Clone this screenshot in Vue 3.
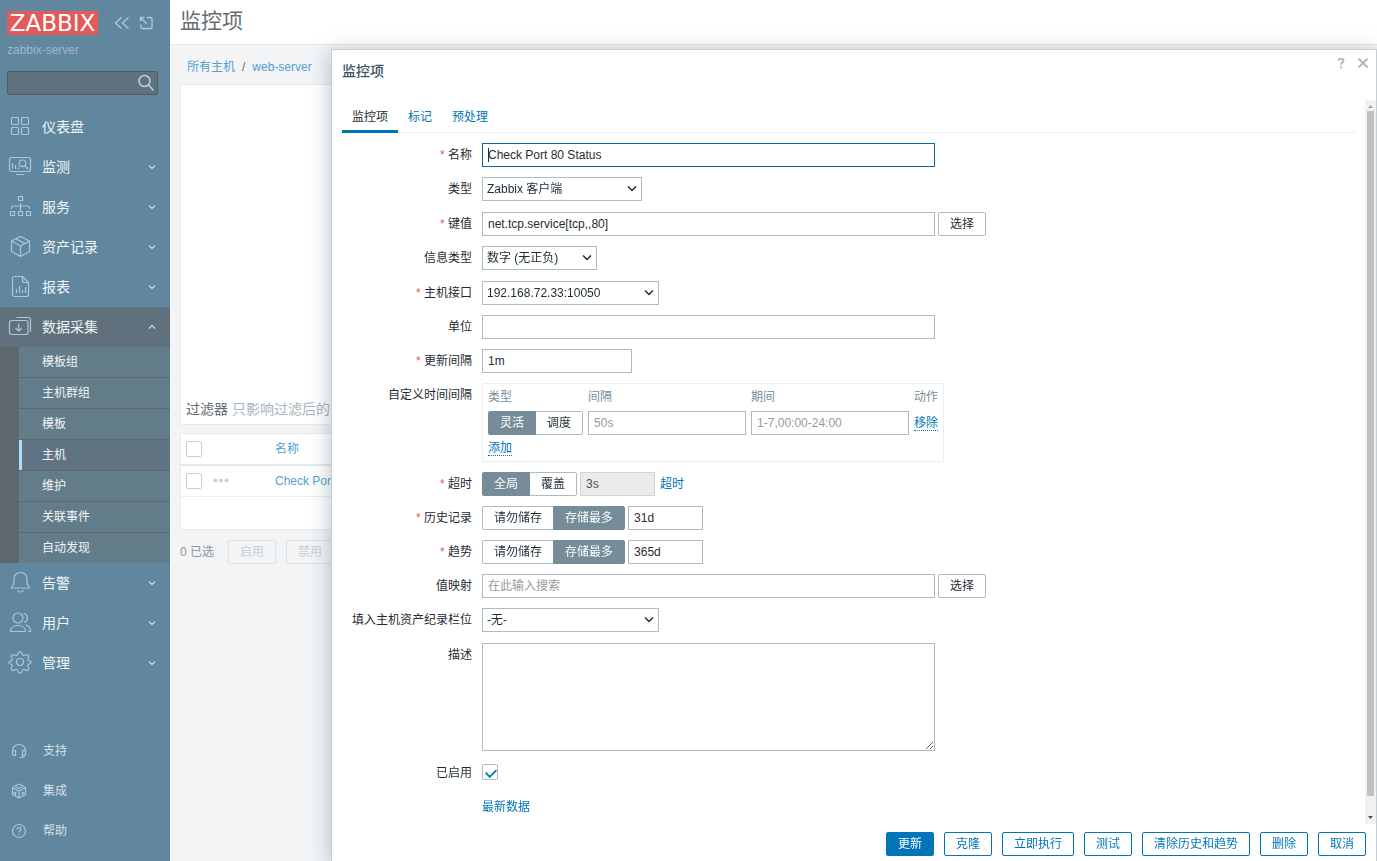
<script setup>
import { onMounted, reactive, ref } from 'vue'

const mainMenu = [
  { name: '仪表盘', icon: 'M4.5 2.5h5a1 1 0 0 1 1 1v5a1 1 0 0 1-1 1h-5a1 1 0 0 1-1-1v-5a1 1 0 0 1 1-1zM14.5 2.5h5a1 1 0 0 1 1 1v5a1 1 0 0 1-1 1h-5a1 1 0 0 1-1-1v-5a1 1 0 0 1 1-1zM4.5 12.5h5a1 1 0 0 1 1 1v5a1 1 0 0 1-1 1h-5a1 1 0 0 1-1-1v-5a1 1 0 0 1 1-1zM14.5 12.5h5a1 1 0 0 1 1 1v5a1 1 0 0 1-1 1h-5a1 1 0 0 1-1-1v-5a1 1 0 0 1 1-1z', leaf: true },
  { name: '监测', icon: 'M3.5 2.5h17a2 2 0 0 1 2 2v10a2 2 0 0 1-2 2h-17a2 2 0 0 1-2-2v-10a2 2 0 0 1 2-2zM8 19.5h8M4.5 8v6M7.5 10v4M10.5 12.5v1.5M14.5 5a3.300 3.300 0 1 1 0 6.600a3.300 3.300 0 0 1 0-6.600zM17 10.600l3.200 3.400' },
  { name: '服务', icon: 'M10.5 1.500h4v4h-4zM12.500 8v8M3.500 14v-1a2 2 0 0 1 2-2h14a2 2 0 0 1 2 2v1M2.500 16.500h4v4h-4zM10.500 16.500h4v4h-4zM18.500 16.500h4v4h-4z' },
  { name: '资产记录', icon: 'M12.500 1.500l9 4.500v10.500l-9 5l-9-5v-10.500zM3.500 6l9 5l9-5M12.500 11v10.500M8 3.800l9 4.800' },
  { name: '报表', icon: 'M6.500 1.500h8l6 6v12a2 2 0 0 1-2 2h-12a2 2 0 0 1-2-2v-16a2 2 0 0 1 2-2zM14.500 1.500v4a2 2 0 0 0 2 2h4M8.500 14v4M11.500 11v7M14.500 15v3M17.500 12v6' },
  {
    name: '数据采集',
    icon: 'M3.500 5.500h14.500a2 2 0 0 1 2 2v10a2 2 0 0 1-2 2h-14.500a2 2 0 0 1-2-2v-10a2 2 0 0 1 2-2zM8.500 2.500h12a2 2 0 0 1 2 2v12.500M10.700 8.500v7.500M7.500 13l3.200 3l3.200-3',
    open: true,
    children: ['模板组', '主机群组', '模板', '主机', '维护', '关联事件', '自动发现'],
  },
  { name: '告警', icon: 'M12.500 1.500c-4 0-6.500 2.500-6.500 6.500v4c0 2-2.500 2.500-2.500 5h18c0-2.500-2.500-3-2.500-5v-4c0-4-2.500-6.500-6.500-6.500zM9.500 19.500c1 2 5 2 6 0' },
  { name: '用户', icon: 'M10 2a5 5 0 1 1 0 10a5 5 0 0 1 0-10zM2.500 20.500c0-3.500 3-6 7.500-6s7.500 2.500 7.500 6zM15.500 2.500c5 1 5 7.500 0.500 9M17.500 14c3 0.500 5 3 5 6.500h-2.500' },
  { name: '管理', icon: 'M12 7.500a3.500 3.500 0 1 1 0 7a3.500 3.500 0 0 1 0-7zM10 2.500q0.300-1.700 2-1.700t2 1.700q0.200 1.600 1.300 2t2.300-0.500q1.500-1 2.600 0.200t0.200 2.600q-0.900 1.200-0.500 2.200t2 1.200q1.300 0.200 1.300 0.800t-1.300 1.800q-1.600 0.200-2 1.200t0.500 2.200q0.900 1.400-0.200 2.600t-2.600 0.200q-1.200-0.900-2.300-0.500t-1.300 2q-0.300 1.700-2 1.700t-2-1.700q-0.200-1.600-1.300-2t-2.300 0.500q-1.500 1-2.600-0.200t-0.200-2.600q0.900-1.200 0.500-2.200t-2-1.200q-1.300-0.500-1.300-1.300t1.300-1.300q1.600-0.200 2-1.200t-0.500-2.200q-0.900-1.400 0.200-2.600t2.600-0.200q1.200 0.900 2.300 0.500t1.300-2z' },
]

const footerMenu = [
  { name: '支持', icon: 'M1.500 9v-1.500a6.500 6 0 0 1 13 0v1.500M3 7.500h1.500v5h-1.500a1.500 1.500 0 0 1-1.500-1.500v-2a1.500 1.500 0 0 1 1.500-1.500zM11.500 7.500h1.500a1.500 1.500 0 0 1 1.500 1.500v2a1.500 1.500 0 0 1-1.500 1.500h-1.500zM13.500 12.500c0 1.500-2 2-5 2' },
  { name: '集成', icon: 'M8 1l6.500 3.500v7l-6.500 3.500l-6.500-3.500v-7zM1.500 4.500l6.500 3.500l6.500-3.500M8 8v7M4.500 9v3M11.500 9v3M5 4l3 1.500l3-1.500M2.500 10l3-1M13.500 10l-3-1' },
  { name: '帮助', icon: 'M8 1.500a6.500 6.500 0 1 1 0 13a6.500 6.500 0 0 1 0-13zM6 6.500c0-2.500 4-2.500 4 0c0 1.500-2 1.500-2 3M8 10.800v1.200' },
]

const actions = ['克隆', '立即执行', '测试', '清除历史和趋势', '删除', '取消']

const form = reactive({
  name: 'Check Port 80 Status',
  key: 'net.tcp.service[tcp,,80]',
  units: '',
  delay: '1m',
  intervalType: 'flexible',
  timeoutMode: 'global',
  timeout: '3s',
  historyMode: 'store',
  history: '31d',
  trendsMode: 'store',
  trends: '365d',
  description: '',
  enabled: true,
})

const nameField = ref(null)
const caretAtStart = ref(true)

function trackCaret() {
  caretAtStart.value = nameField.value.selectionEnd === 0
}

onMounted(() => {
  nameField.value.focus({ preventScroll: true })
  nameField.value.setSelectionRange(0, 0)
})
</script>

<template>
  <div class="page">
    <aside class="sidebar">
      <div class="brand">
        <a href="#" class="logo">ZABBIX</a>
        <button type="button" class="tool" aria-label="收起侧边栏">
          <svg width="16" height="16" viewBox="0 0 16 16"><path d="M7.500 2.500l-6 5.500l6 5.500M14.500 2.500l-6 5.500l6 5.500" /></svg>
        </button>
        <button type="button" class="tool" aria-label="隐藏侧边栏">
          <svg width="16" height="16" viewBox="0 0 16 16"><path d="M9 2.500h4a1 1 0 0 1 1 1v9a1 1 0 0 1-1 1h-9a1 1 0 0 1-1-1v-3M2.500 6.500v-4h4M2.500 2.500l6.500 6.500" /></svg>
        </button>
      </div>
      <div class="server">zabbix-server</div>
      <form class="search" @submit.prevent>
        <input type="text" aria-label="搜索" />
        <button type="submit" aria-label="搜索">
          <svg width="18" height="18" viewBox="0 0 18 18"><path d="M7.500 1.500a5.500 5.500 0 1 1 0 11a5.500 5.500 0 0 1 0-11zM11.500 11l5 5.500" /></svg>
        </button>
      </form>
      <nav>
        <ul class="menu">
          <li v-for="item in mainMenu" :key="item.name">
            <a href="#" class="menu-link" :class="{ open: item.open }">
              <svg class="menu-icon" width="24" height="24" viewBox="0 0 24 24"><path :d="item.icon" /></svg>
              <span>{{ item.name }}</span>
              <svg v-if="!item.leaf" class="arrow" width="8" height="8" viewBox="0 0 8 8">
                <path :d="item.open ? 'M1 5.500l3-3l3 3' : 'M1 2.500l3 3l3-3'" />
              </svg>
            </a>
            <ul v-if="item.children" class="submenu">
              <li v-for="child in item.children" :key="child">
                <a href="#" :class="{ current: child === '主机' }">{{ child }}</a>
              </li>
            </ul>
          </li>
        </ul>
      </nav>
      <ul class="menu footer-menu">
        <li v-for="item in footerMenu" :key="item.name">
          <a href="#" class="menu-link">
            <svg width="16" height="16" viewBox="0 0 16 16"><path :d="item.icon" /></svg>
            <span>{{ item.name }}</span>
          </a>
        </li>
      </ul>
    </aside>

    <main class="content">
      <header class="page-header"><h1>监控项</h1></header>
      <div class="breadcrumb"><a href="#">所有主机</a><span>/</span><a href="#">web-server</a></div>
      <section class="filter"><p><b>过滤器</b> 只影响过滤后的数据</p></section>
      <table class="items">
        <thead>
          <tr>
            <th class="check"><input type="checkbox" aria-label="全选" /></th>
            <th class="dots"></th>
            <th><a href="#">名称</a></th>
          </tr>
        </thead>
        <tbody>
          <tr>
            <td class="check"><input type="checkbox" aria-label="选择 Check Port 80 Status" /></td>
            <td class="dots">
              <button type="button" aria-label="更多">
                <svg width="16" height="6" viewBox="0 0 16 6"><circle cx="2.500" cy="2.500" r="2" /><circle cx="8" cy="2.500" r="2" /><circle cx="13.500" cy="2.500" r="2" /></svg>
              </button>
            </td>
            <td><a href="#">Check Port 80 Status</a></td>
          </tr>
        </tbody>
        <tfoot><tr><td colspan="3"></td></tr></tfoot>
      </table>
      <div class="bulk">
        <span>0 已选</span>
        <button type="button" disabled>启用</button>
        <button type="button" disabled>禁用</button>
      </div>
    </main>

    <section class="dialog" role="dialog" aria-labelledby="dialog-title">
      <header class="dialog-header">
        <h2 id="dialog-title">监控项</h2>
        <div class="dialog-tools">
          <a href="#" aria-label="帮助"><svg width="12" height="12" viewBox="0 0 12 12"><path d="M3.800 3.800c0-2.600 4.600-2.600 4.600 0c0 1.700-2.300 1.700-2.300 3.900M6.100 9.300v1.900" /></svg></a>
          <button type="button" aria-label="关闭"><svg width="12" height="12" viewBox="0 0 12 12"><path d="M1.500 1.500l9 9M10.500 1.500l-9 9" /></svg></button>
        </div>
      </header>

      <div class="dialog-scroll">
        <div class="dialog-body">
          <nav class="tabs">
            <a href="#" class="active">监控项</a>
            <a href="#">标记</a>
            <a href="#">预处理</a>
          </nav>
          <form class="fields" @submit.prevent>
            <label class="required" for="name">名称</label>
            <div class="field">
              <input id="name" ref="nameField" v-model="form.name" class="wide" :class="{ 'caret-start': caretAtStart }" type="text" @keyup="trackCaret" @click="trackCaret" @input="trackCaret" />
            </div>

            <label for="type">类型</label>
            <div class="field tall">
              <span class="select type"><select id="type"><option>Zabbix 客户端</option></select><svg width="10" height="8" viewBox="0 0 10 8"><path d="M1 1.500l4 4l4-4" /></svg></span>
            </div>

            <label class="required" for="key">键值</label>
            <div class="field">
              <input id="key" v-model="form.key" class="wide" type="text" />
              <button type="button" class="pick">选择</button>
            </div>

            <label for="value-type">信息类型</label>
            <div class="field tall">
              <span class="select value-type"><select id="value-type"><option>数字 (无正负)</option></select><svg width="10" height="8" viewBox="0 0 10 8"><path d="M1 1.500l4 4l4-4" /></svg></span>
            </div>

            <label class="required" for="interface">主机接口</label>
            <div class="field">
              <span class="select long"><select id="interface"><option>192.168.72.33:10050</option></select><svg width="10" height="8" viewBox="0 0 10 8"><path d="M1 1.500l4 4l4-4" /></svg></span>
            </div>

            <label for="units">单位</label>
            <div class="field"><input id="units" v-model="form.units" class="wide" type="text" /></div>

            <label class="required" for="delay">更新间隔</label>
            <div class="field"><input id="delay" v-model="form.delay" class="medium" type="text" /></div>

            <span class="caption">自定义时间间隔</span>
            <div class="field">
              <table class="intervals">
                <thead>
                  <tr><th>类型</th><th>间隔</th><th>期间</th><th>动作</th></tr>
                </thead>
                <tbody>
                  <tr>
                    <td>
                      <div class="segmented">
                        <label><input v-model="form.intervalType" type="radio" name="interval-type" value="flexible" /><span>灵活</span></label>
                        <label><input v-model="form.intervalType" type="radio" name="interval-type" value="scheduling" /><span>调度</span></label>
                      </div>
                    </td>
                    <td><input class="cell" type="text" placeholder="50s" aria-label="间隔" /></td>
                    <td><input class="cell" type="text" placeholder="1-7,00:00-24:00" aria-label="期间" /></td>
                    <td><button type="button" class="link">移除</button></td>
                  </tr>
                </tbody>
                <tfoot>
                  <tr><td colspan="4"><button type="button" class="link">添加</button></td></tr>
                </tfoot>
              </table>
            </div>

            <label class="required" for="timeout">超时</label>
            <div class="field">
              <div class="segmented">
                <label><input v-model="form.timeoutMode" type="radio" name="timeout-mode" value="global" /><span>全局</span></label>
                <label><input v-model="form.timeoutMode" type="radio" name="timeout-mode" value="override" /><span>覆盖</span></label>
              </div>
              <input id="timeout" v-model="form.timeout" class="short" type="text" :readonly="form.timeoutMode === 'global'" />
              <a href="#" class="after">超时</a>
            </div>

            <label class="required" for="history">历史记录</label>
            <div class="field">
              <div class="segmented">
                <label><input v-model="form.historyMode" type="radio" name="history-mode" value="off" /><span>请勿储存</span></label>
                <label><input v-model="form.historyMode" type="radio" name="history-mode" value="store" /><span>存储最多</span></label>
              </div>
              <input id="history" v-model="form.history" class="short" type="text" />
            </div>

            <label class="required" for="trends">趋势</label>
            <div class="field">
              <div class="segmented">
                <label><input v-model="form.trendsMode" type="radio" name="trends-mode" value="off" /><span>请勿储存</span></label>
                <label><input v-model="form.trendsMode" type="radio" name="trends-mode" value="store" /><span>存储最多</span></label>
              </div>
              <input id="trends" v-model="form.trends" class="short" type="text" />
            </div>

            <label for="valuemap">值映射</label>
            <div class="field">
              <input id="valuemap" class="wide" type="text" placeholder="在此输入搜索" />
              <button type="button" class="pick">选择</button>
            </div>

            <label for="inventory">填入主机资产纪录栏位</label>
            <div class="field tall">
              <span class="select long"><select id="inventory"><option>-无-</option></select><svg width="10" height="8" viewBox="0 0 10 8"><path d="M1 1.500l4 4l4-4" /></svg></span>
            </div>

            <label for="description">描述</label>
            <div class="field"><textarea id="description" v-model="form.description" class="wide"></textarea></div>

            <label for="enabled">已启用</label>
            <div class="field"><input id="enabled" v-model="form.enabled" type="checkbox" /></div>

            <span></span>
            <div class="field middle"><a href="#">最新数据</a></div>
          </form>
        </div>
        <div class="scrollbar" aria-hidden="true">
          <svg width="11" height="11" viewBox="0 0 11 11"><path class="dim" d="M3 8l2.500-3l2.500 3z" /></svg>
          <div class="thumb"></div>
          <svg width="11" height="11" viewBox="0 0 11 11"><path d="M3 4l2.500 3l2.500-3z" /></svg>
        </div>
      </div>

      <footer class="dialog-footer">
        <button type="button" class="primary">更新</button>
        <button v-for="action in actions" :key="action" type="button">{{ action }}</button>
      </footer>
    </section>
  </div>
</template>

<style>
body {
  margin: 0;
  background: #f2f4f6;
}
</style>

<style scoped>
.page,
.page * {
  box-sizing: border-box;
}

.page {
  position: relative;
  display: flex;
  min-height: 100vh;
  overflow: hidden;
  font: 12px/16px "Liberation Sans", Arial, "Noto Sans CJK SC", sans-serif;
  color: #1f2c33;
}

button,
input,
select,
textarea {
  margin: 0;
  font: inherit;
  color: inherit;
}

button {
  padding: 0;
  border: 0;
  background: none;
}

svg {
  display: block;
  flex: none;
  fill: none;
  stroke: currentColor;
}

a {
  color: #0275b8;
  text-decoration: none;
}

ul {
  margin: 0;
  padding: 0;
  list-style: none;
}

/* Sidebar */
.sidebar {
  display: flex;
  flex: none;
  flex-direction: column;
  width: 170px;
  padding-bottom: 10px;
  background: #61879f;
}

.brand {
  display: flex;
  align-items: center;
  gap: 8px;
  height: 24px;
  margin: 11px 0 0 7px;
  color: #accbdd;
}

.tool svg {
  stroke-width: 1.300;
}

.logo {
  width: 91px;
  margin-right: 8px;
  background: #e45959;
  color: #fff;
  font: 23px/24px "DejaVu Sans", sans-serif;
  text-align: center;
}

.server {
  margin: 7px 7px 13px;
  color: #a0b7c5;
}

.search {
  position: relative;
  margin: 0 12px 12px 7px;
  color: #b5d3e3;
}

.search input {
  display: block;
  width: 100%;
  height: 24px;
  padding: 0 28px 0 5px;
  border: 1px solid #555c60;
  border-radius: 2px;
  background: #60717d;
}

.search button {
  position: absolute;
  top: 3px;
  right: 3px;
}

.search svg {
  stroke-width: 1.500;
}

.menu-link {
  display: flex;
  align-items: center;
  height: 40px;
  padding: 0 14px 0 8px;
  color: #f1f5f7;
  font-size: 14px;
}

.menu-link svg {
  color: #a9c8da;
  stroke-width: 1.200;
  stroke-linejoin: round;
}

.menu-link span {
  flex: 1;
  margin-left: 10px;
}

.menu-link .arrow {
  color: #c6d8e2;
  stroke-width: 1.300;
}

.menu-link.open {
  background: #60717d;
}

.submenu {
  padding-left: 19px;
  background: #5d686e;
}

.submenu a {
  display: block;
  height: 30px;
  padding-left: 20px;
  border-left: 3px solid #637c8a;
  background: #637c8a;
  color: #f1f5f7;
  line-height: 30px;
}

.submenu li + li {
  border-top: 1px solid #5d686e;
}

.submenu .current {
  border-left-color: #abdcff;
  background: #607383;
}

.footer-menu {
  margin-top: auto;
}

.footer-menu .menu-link {
  padding-left: 11px;
  color: #d5e2e9;
  font-size: 12px;
}

.footer-menu .menu-link span {
  margin-left: 16px;
}

/* Item list behind the dialog */
.content {
  flex: 1;
  min-width: 0;
  color: #8a979e;
}

.content a {
  color: #559fcf;
}

.page-header {
  height: 45px;
  padding: 0 10px;
  border-bottom: 1px solid #e3e8ec;
  background: #fff;
}

h1 {
  margin: 0;
  color: #656d72;
  font-size: 21px;
  font-weight: 400;
  line-height: 42px;
}

.breadcrumb {
  display: flex;
  gap: 7px;
  padding: 14px 17px 9px;
  color: #656d72;
}

.filter {
  display: flex;
  align-items: flex-end;
  height: 341px;
  margin: 0 10px 8px;
  padding: 5px;
  border: 1px solid #e6eaed;
  background: #fff;
  color: #a7b4bb;
  font-size: 14px;
  line-height: 20px;
}

.filter p {
  margin: 0;
}

.filter b {
  color: #656d72;
  font-weight: 400;
}

.items {
  width: calc(100% - 20px);
  margin: 0 10px;
  border: 1px solid #e6eaed;
  border-spacing: 0;
  background: #fff;
  text-align: left;
}

.items th,
.items td {
  height: 31px;
  padding: 0 5px;
  border-bottom: 1px solid #ebeef0;
  font-weight: 400;
}

.items th {
  height: 32px;
  border-bottom: 2px solid #e3e8eb;
}

.items tfoot td {
  height: 32px;
  border-bottom: 0;
}

.items .check {
  width: 27px;
}

.items .dots {
  width: 62px;
}

.items .dots button {
  display: block;
}

.items .dots svg {
  fill: #c5d0d6;
  stroke: none;
}

input[type="checkbox"] {
  display: block;
  width: 16px;
  height: 16px;
  border: 1px solid #acbbc2;
  border-radius: 2px;
  background: #fff;
  appearance: none;
}

.items input[type="checkbox"] {
  border-color: #c5d0d6;
}

.field input[type="checkbox"] {
  margin: 3px 0;
}

.bulk {
  display: flex;
  align-items: center;
  gap: 10px;
  margin: 10px;
}

.bulk span {
  margin-right: 4px;
}

.bulk button {
  height: 24px;
  padding: 0 11px;
  border: 1px solid #dce2e5;
  border-radius: 2px;
  color: #c8d0d4;
}

/* Dialog */
.dialog {
  position: absolute;
  top: 49px;
  right: 0;
  bottom: 0;
  left: 331px;
  display: flex;
  flex-direction: column;
  border: 1px solid #c5d0d6;
  border-bottom: 0;
  background: #fff;
  box-shadow: 0 4px 20px rgba(50, 75, 88, 0.35);
}

.dialog-header {
  display: flex;
  justify-content: space-between;
  height: 50px;
  padding: 7px 7px 0 10px;
}

h2 {
  margin: 0;
  color: #3c515d;
  font-size: 14px;
  font-weight: 500;
  line-height: 28px;
}

.dialog-tools {
  display: flex;
  gap: 10px;
}

.dialog-tools a,
.dialog-tools button {
  width: 12px;
  height: 12px;
  color: #acbbc2;
}

.dialog-tools svg {
  stroke-width: 2;
}

.dialog-scroll {
  display: flex;
  flex: 1;
  min-height: 0;
}

.dialog-body {
  flex: 1;
  min-width: 0;
  padding: 0 10px;
}

.tabs {
  display: flex;
  height: 33px;
  border-bottom: 1px solid #ebeef0;
}

.tabs a {
  height: 33px;
  padding: 2px 10px 0;
  line-height: 31px;
}

.tabs .active {
  border-bottom: 3px solid #0275b8;
  color: #1f2c33;
}

.fields {
  display: grid;
  grid-template-columns: 130px 1fr;
  gap: 10px;
  margin-top: 10px;
}

.fields > label,
.caption {
  line-height: 24px;
  text-align: right;
  white-space: nowrap;
}

.fields > .required::before {
  content: "* ";
  color: #e45959;
}

.field {
  display: flex;
  align-items: flex-start;
  gap: 3px;
  min-height: 24px;
}

.field.tall {
  min-height: 25px;
}

.field.middle {
  align-items: center;
}

.field input[type="text"],
select,
textarea {
  display: block;
  height: 24px;
  padding: 0 5px;
  border: 1px solid #acbbc2;
  border-radius: 0;
  background: #fff;
  outline: 0;
}

.field input[type="text"]:focus {
  border-color: #0a66a0;
}

.field input[type="text"].caret-start:focus {
  background: linear-gradient(#1f2c33, #1f2c33) 5px 4px / 1px 14px no-repeat #fff;
  caret-color: transparent;
}

.field input[type="text"][readonly] {
  border-color: #ccd5d9;
  background: #ebebeb;
  color: #4f4f4f;
}

::placeholder {
  color: #9a9a9a;
  opacity: 1;
}

.field .wide {
  width: 453px;
}

.medium {
  width: 150px;
}

.short {
  width: 75px;
}

.cell {
  width: 158px;
}

textarea.wide {
  height: 108px;
  resize: vertical;
}

.select {
  position: relative;
}

.select select {
  width: 100%;
  padding: 0 20px 0 4px;
  appearance: none;
}

.select svg {
  position: absolute;
  top: 8px;
  right: 5px;
  stroke-width: 1.500;
  pointer-events: none;
}

.select.type {
  width: 160px;
}

.select.value-type {
  width: 115px;
}

.select.long {
  width: 177px;
}

.pick {
  height: 24px;
  padding: 0 11px;
  border: 1px solid #acbbc2;
  border-radius: 2px;
}

.intervals {
  border: 1px solid #ebeef0;
  border-spacing: 0;
  padding: 5px 0 0 5px;
  text-align: left;
}

.intervals th {
  padding: 0 5px 6px 0;
  color: #768d99;
  font-weight: 400;
}

.intervals td {
  padding: 0 5px 5px 0;
}

.intervals .link {
  display: block;
  height: 16px;
  border-bottom: 1px dotted #0275b8;
  color: #0275b8;
}

.segmented {
  display: flex;
}

.segmented label {
  position: relative;
}

.segmented label + label {
  margin-left: -1px;
}

.segmented input {
  position: absolute;
  opacity: 0;
}

.segmented span {
  display: block;
  height: 24px;
  padding: 0 11px;
  border: 1px solid #acbbc2;
  line-height: 22px;
}

.segmented label:first-child span {
  border-radius: 2px 0 0 2px;
}

.segmented label:last-child span {
  border-radius: 0 2px 2px 0;
}

.segmented input:checked + span {
  position: relative;
  z-index: 1;
  border-color: #768d99;
  background: #768d99;
  color: #fff;
}

.field .after {
  margin-left: 2px;
  line-height: 24px;
}

.field input[type="checkbox"]:checked::before {
  content: "";
  display: block;
  width: 10px;
  height: 6px;
  margin: 3px 2px;
  border: solid #0275b8;
  border-width: 0 0 2px 2px;
  transform: rotate(-45deg) scale(0.85);
}

.scrollbar {
  display: flex;
  flex-direction: column;
  width: 11px;
  padding-bottom: 1px;
  background: #f1f1f1;
}

.scrollbar svg {
  fill: #505050;
  stroke: none;
}

.scrollbar .dim {
  fill: #a3a3a3;
}

.thumb {
  flex: 1;
  margin: 0 2px 16px;
  background: #c1c1c1;
}

.dialog-footer {
  display: flex;
  justify-content: flex-end;
  gap: 10px;
  padding: 8px 10px 5px;
}

.dialog-footer button {
  height: 24px;
  padding: 0 11px;
  border: 1px solid #0275b8;
  border-radius: 2px;
  color: #0275b8;
}

.dialog-footer .primary {
  background: #0275b8;
  color: #fff;
}
</style>
